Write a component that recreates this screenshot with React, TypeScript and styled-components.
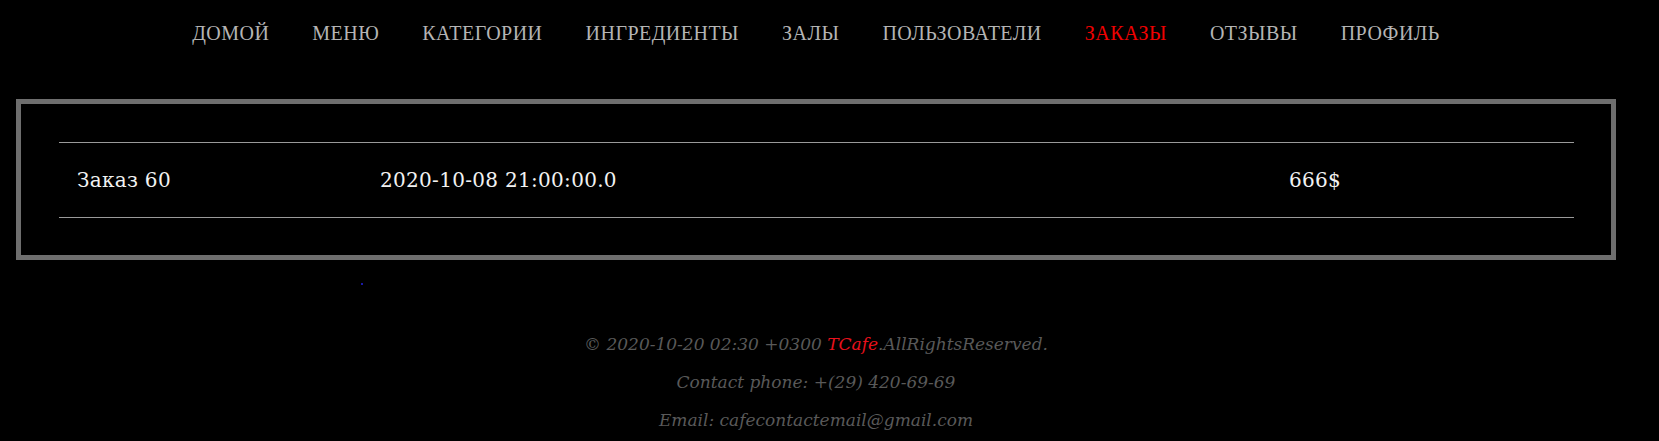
import React from "react";
import styled, { createGlobalStyle } from "styled-components";

type Order = {
  name: string;
  date: string;
  price: string;
};

const NAV_ITEMS = [
  "ДОМОЙ",
  "МЕНЮ",
  "КАТЕГОРИИ",
  "ИНГРЕДИЕНТЫ",
  "ЗАЛЫ",
  "ПОЛЬЗОВАТЕЛИ",
  "ЗАКАЗЫ",
  "ОТЗЫВЫ",
  "ПРОФИЛЬ"
];

const ACTIVE = "ЗАКАЗЫ";

const orders: Order[] = [
  { name: "Заказ 60", date: "2020-10-08 21:00:00.0", price: "666$" }
];

const GlobalStyle = createGlobalStyle`
  html, body {
    margin: 0;
    padding: 0;
    background: #000;
  }

  body {
    font-family: "DejaVu Serif", "Liberation Serif", serif;
  }
`;

export default function App() {
  return (
    <>
      <GlobalStyle />
      <Page>
        <Nav>
          {NAV_ITEMS.map((item) => (
            <NavLink key={item} active={item === ACTIVE}>
              {item}
            </NavLink>
          ))}
        </Nav>

        <Frame>
          <Table>
            {orders.map((o) => (
              <Row key={o.name}>
                <Cell>{o.name}</Cell>
                <Cell>{o.date}</Cell>
                <Cell>{o.price}</Cell>
              </Row>
            ))}
          </Table>
        </Frame>

        <Pager>
          <PagerDot />
        </Pager>

        <Footer>
          <FooterLine>
            © 2020-10-20 02:30 +0300 <Brand>TCafe</Brand>.AllRightsReserved.
          </FooterLine>
          <FooterLine>Contact phone: +(29) 420-69-69</FooterLine>
          <FooterLine>Email: cafecontactemail@gmail.com</FooterLine>
        </Footer>
      </Page>
    </>
  );
}

const Page = styled.div`
  width: 1600px;
  margin-left: 16px;
  display: flex;
  flex-direction: column;
`;

const Nav = styled.nav`
  height: 66px;
  display: flex;
  align-items: center;
  justify-content: center;
  gap: 43px;
`;

const NavLink = styled.a<{ active?: boolean }>`
  font-family: "Liberation Serif", "Times New Roman", serif;
  font-size: 20px;
  letter-spacing: 0.48px;
  color: ${(p) => (p.active ? "#f00000" : "#b4b4b4")};
  text-decoration: none;
  cursor: pointer;
`;

const Frame = styled.section`
  margin-top: 33px;
  border: 5px solid #6e6e6e;
  padding: 38px 37px 37px 38px;
`;

const Table = styled.div`
  display: flex;
  flex-direction: column;
`;

const Row = styled.div`
  display: grid;
  grid-template-columns: 20% 60% 20%;
  align-items: center;
  height: 74px;
  border-top: 1px solid #9a9a9a;
  border-bottom: 1px solid #9a9a9a;
`;

const Cell = styled.div`
  padding-left: 18px;
  font-size: 20px;
  letter-spacing: 0.3px;
  color: #f2f2f2;
`;

const Pager = styled.div`
  height: 25px;
  display: flex;
  align-items: flex-end;
  padding-left: 345px;
`;

const PagerDot = styled.span`
  width: 2px;
  height: 2px;
  background: #1a1aa8;
`;

const Footer = styled.footer`
  margin-top: 40px;
  display: flex;
  flex-direction: column;
  align-items: center;
`;

const FooterLine = styled.p`
  margin: 0;
  line-height: 38px;
  font-size: 17px;
  font-style: italic;
  color: #595959;
`;

const Brand = styled.span`
  color: #e8111c;
`;
